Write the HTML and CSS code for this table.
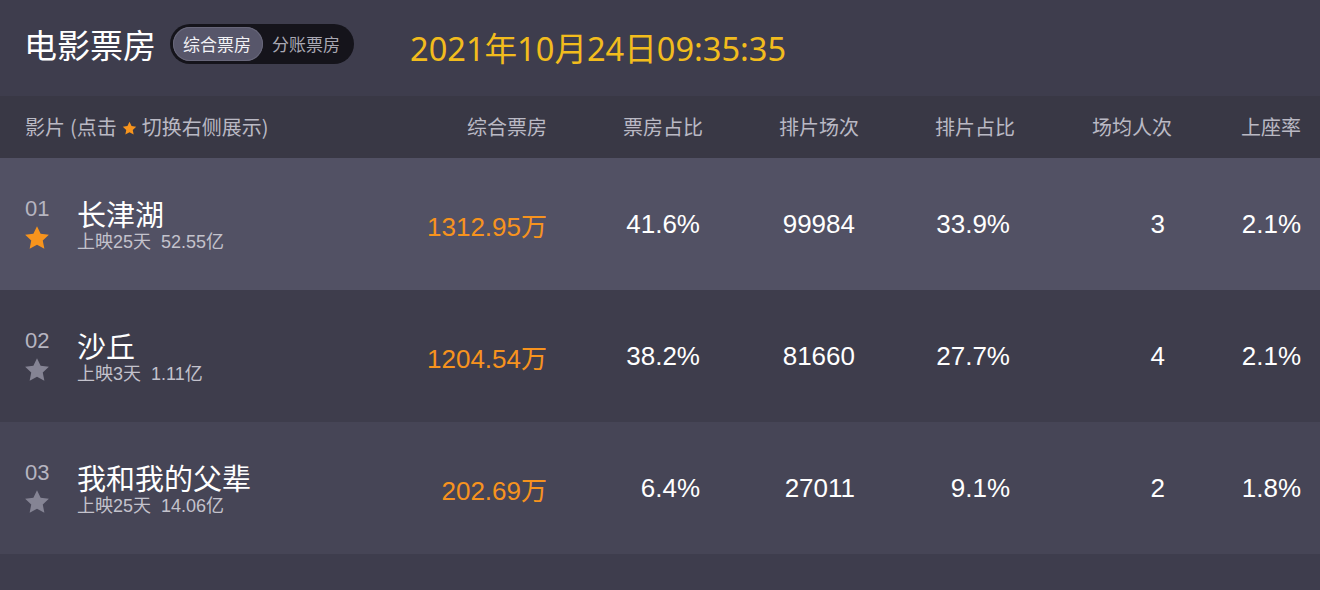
FILE: index.html
```html
<!DOCTYPE html>
<html lang="zh-CN">
<head>
<meta charset="utf-8">
<title>电影票房</title>
<link rel="stylesheet" href="styles.css">
</head>
<body>
<div class="page">
  <header class="topbar">
    <h1 class="title">电影票房</h1>
    <div class="toggle">
      <span class="tab active">综合票房</span>
      <span class="tab">分账票房</span>
    </div>
    <div class="clock">2021年10月24日09:35:35</div>
  </header>

  <div class="table">
    <div class="row head">
      <div class="cell name-col">影片<span class="gap"></span>(点击<svg class="mini-star" viewBox="0 0 24 24"><path d="M12 2.5l2.9 6.1 6.6.8-4.9 4.6 1.3 6.6L12 17.3l-5.9 3.3 1.3-6.6-4.9-4.6 6.6-.8z"/></svg>切换右侧展示)</div>
      <div class="cell num">综合票房</div>
      <div class="cell num">票房占比</div>
      <div class="cell num">排片场次</div>
      <div class="cell num">排片占比</div>
      <div class="cell num">场均人次</div>
      <div class="cell num">上座率</div>
    </div>

    <div class="row film hl">
      <div class="cell name-col">
        <div class="rank">
          <span class="rank-no">01</span>
          <svg class="star on" viewBox="0 0 24 24"><path d="M12 2.5l2.9 6.1 6.6.8-4.9 4.6 1.3 6.6L12 17.3l-5.9 3.3 1.3-6.6-4.9-4.6 6.6-.8z"/></svg>
        </div>
        <div class="info">
          <div class="film-name">长津湖</div>
          <div class="film-sub">上映25天&nbsp;&nbsp;52.55亿</div>
        </div>
      </div>
      <div class="cell num val box">1312.95万</div>
      <div class="cell num val p2">41.6%</div>
      <div class="cell num val p3">99984</div>
      <div class="cell num val p4">33.9%</div>
      <div class="cell num val p5">3</div>
      <div class="cell num val">2.1%</div>
    </div>

    <div class="row film">
      <div class="cell name-col">
        <div class="rank">
          <span class="rank-no">02</span>
          <svg class="star" viewBox="0 0 24 24"><path d="M12 2.5l2.9 6.1 6.6.8-4.9 4.6 1.3 6.6L12 17.3l-5.9 3.3 1.3-6.6-4.9-4.6 6.6-.8z"/></svg>
        </div>
        <div class="info">
          <div class="film-name">沙丘</div>
          <div class="film-sub">上映3天&nbsp;&nbsp;1.11亿</div>
        </div>
      </div>
      <div class="cell num val box">1204.54万</div>
      <div class="cell num val p2">38.2%</div>
      <div class="cell num val p3">81660</div>
      <div class="cell num val p4">27.7%</div>
      <div class="cell num val p5">4</div>
      <div class="cell num val">2.1%</div>
    </div>

    <div class="row film alt">
      <div class="cell name-col">
        <div class="rank">
          <span class="rank-no">03</span>
          <svg class="star" viewBox="0 0 24 24"><path d="M12 2.5l2.9 6.1 6.6.8-4.9 4.6 1.3 6.6L12 17.3l-5.9 3.3 1.3-6.6-4.9-4.6 6.6-.8z"/></svg>
        </div>
        <div class="info">
          <div class="film-name">我和我的父辈</div>
          <div class="film-sub">上映25天&nbsp;&nbsp;14.06亿</div>
        </div>
      </div>
      <div class="cell num val box">202.69万</div>
      <div class="cell num val p2">6.4%</div>
      <div class="cell num val p3">27011</div>
      <div class="cell num val p4">9.1%</div>
      <div class="cell num val p5">2</div>
      <div class="cell num val">1.8%</div>
    </div>
  </div>
</div>
</body>
</html>
```

FILE: styles.css
```css
* { box-sizing: border-box; }
html, body {
  margin: 0;
  padding: 0;
  background: #3e3d4d;
  width: 1320px;
  height: 590px;
  overflow: hidden;
  font-family: "Liberation Sans", "Noto Sans CJK SC", sans-serif;
}
.page { width: 1320px; }

.topbar {
  height: 96px;
  display: flex;
  align-items: center;
  padding: 0 0 0 24px;
}
.title {
  margin: 0;
  font-family: "Noto Sans CJK SC", sans-serif;
  font-size: 33px;
  font-weight: 400;
  color: #ffffff;
  line-height: 1;
  margin-top: -7px;
}
.toggle {
  display: flex;
  align-items: center;
  margin-left: 14px;
  margin-top: -8px;
  height: 40px;
  width: 184px;
  padding: 0 3px;
  border-radius: 20px;
  background: #15141b;
}
.tab {
  font-family: "Noto Sans CJK SC", sans-serif;
  font-size: 17px;
  color: #a9a8b3;
  height: 34px;
  line-height: 34px;
  padding: 0 9px;
  border-radius: 17px;
}
.tab.active {
  background: #57566a;
  color: #f2f2f6;
  width: 90px;
  padding: 0 9px 0 10px;
  box-shadow: inset 0 0 0 1px #68677a;
}
.clock {
  margin-left: 56px;
  margin-top: 3px;
  font-family: "Noto Sans", "Noto Sans CJK SC", sans-serif;
  font-size: 32.6px;
  color: #f2bc1d;
  line-height: 1;
}

.table { display: flex; flex-direction: column; }
.row {
  display: grid;
  grid-template-columns: 1fr 156px 156px 156px 156px 157px 129px;
  padding: 0 19px 0 25px;
  align-items: center;
}
.row.head {
  height: 62px;
  background: #393845;
  font-family: "Noto Sans CJK SC", sans-serif;
  font-size: 20px;
  color: #bab9c4;
}
.row.head .cell { margin-top: -2px; }
.row.head .name-col { display: block; }
.gap { display: inline-block; width: 5px; }
.mini-star {
  width: 17px;
  height: 17px;
  fill: #f7941d;
  vertical-align: -2px;
  margin: 0 4px 0 4px;
}
.num { text-align: right; }

.row.film { height: 132px; background: #3e3d4c; }
.row.film.hl { background: #525164; }
.row.film.alt { background: #464556; }

.name-col { display: flex; align-items: center; }
.rank {
  width: 52px;
  display: flex;
  flex-direction: column;
  align-items: flex-start;
  margin-top: 1px;
}
.rank-no {
  font-size: 22px;
  color: #b6b5c0;
  line-height: 26px;
}
.star {
  width: 30px;
  height: 30px;
  margin-left: -3px;
  margin-top: 1px;
  fill: #858494;
}
.star.on { fill: #f7941d; }

.info { display: flex; flex-direction: column; margin-top: 3px; }
.film-name {
  font-family: "Noto Sans CJK SC", sans-serif;
  font-size: 29px;
  color: #ffffff;
  line-height: 36px;
  margin-top: -4px;
}
.film-sub {
  font-size: 18px;
  color: #c3c2cc;
  line-height: 22px;
}

.val {
  font-size: 26px;
  color: #ffffff;
}
.val.box { color: #f7931e; }
.val.p2 { padding-right: 3px; }
.val.p3 { padding-right: 4px; }
.val.p4 { padding-right: 5px; }
.val.p5 { padding-right: 7px; }
```
